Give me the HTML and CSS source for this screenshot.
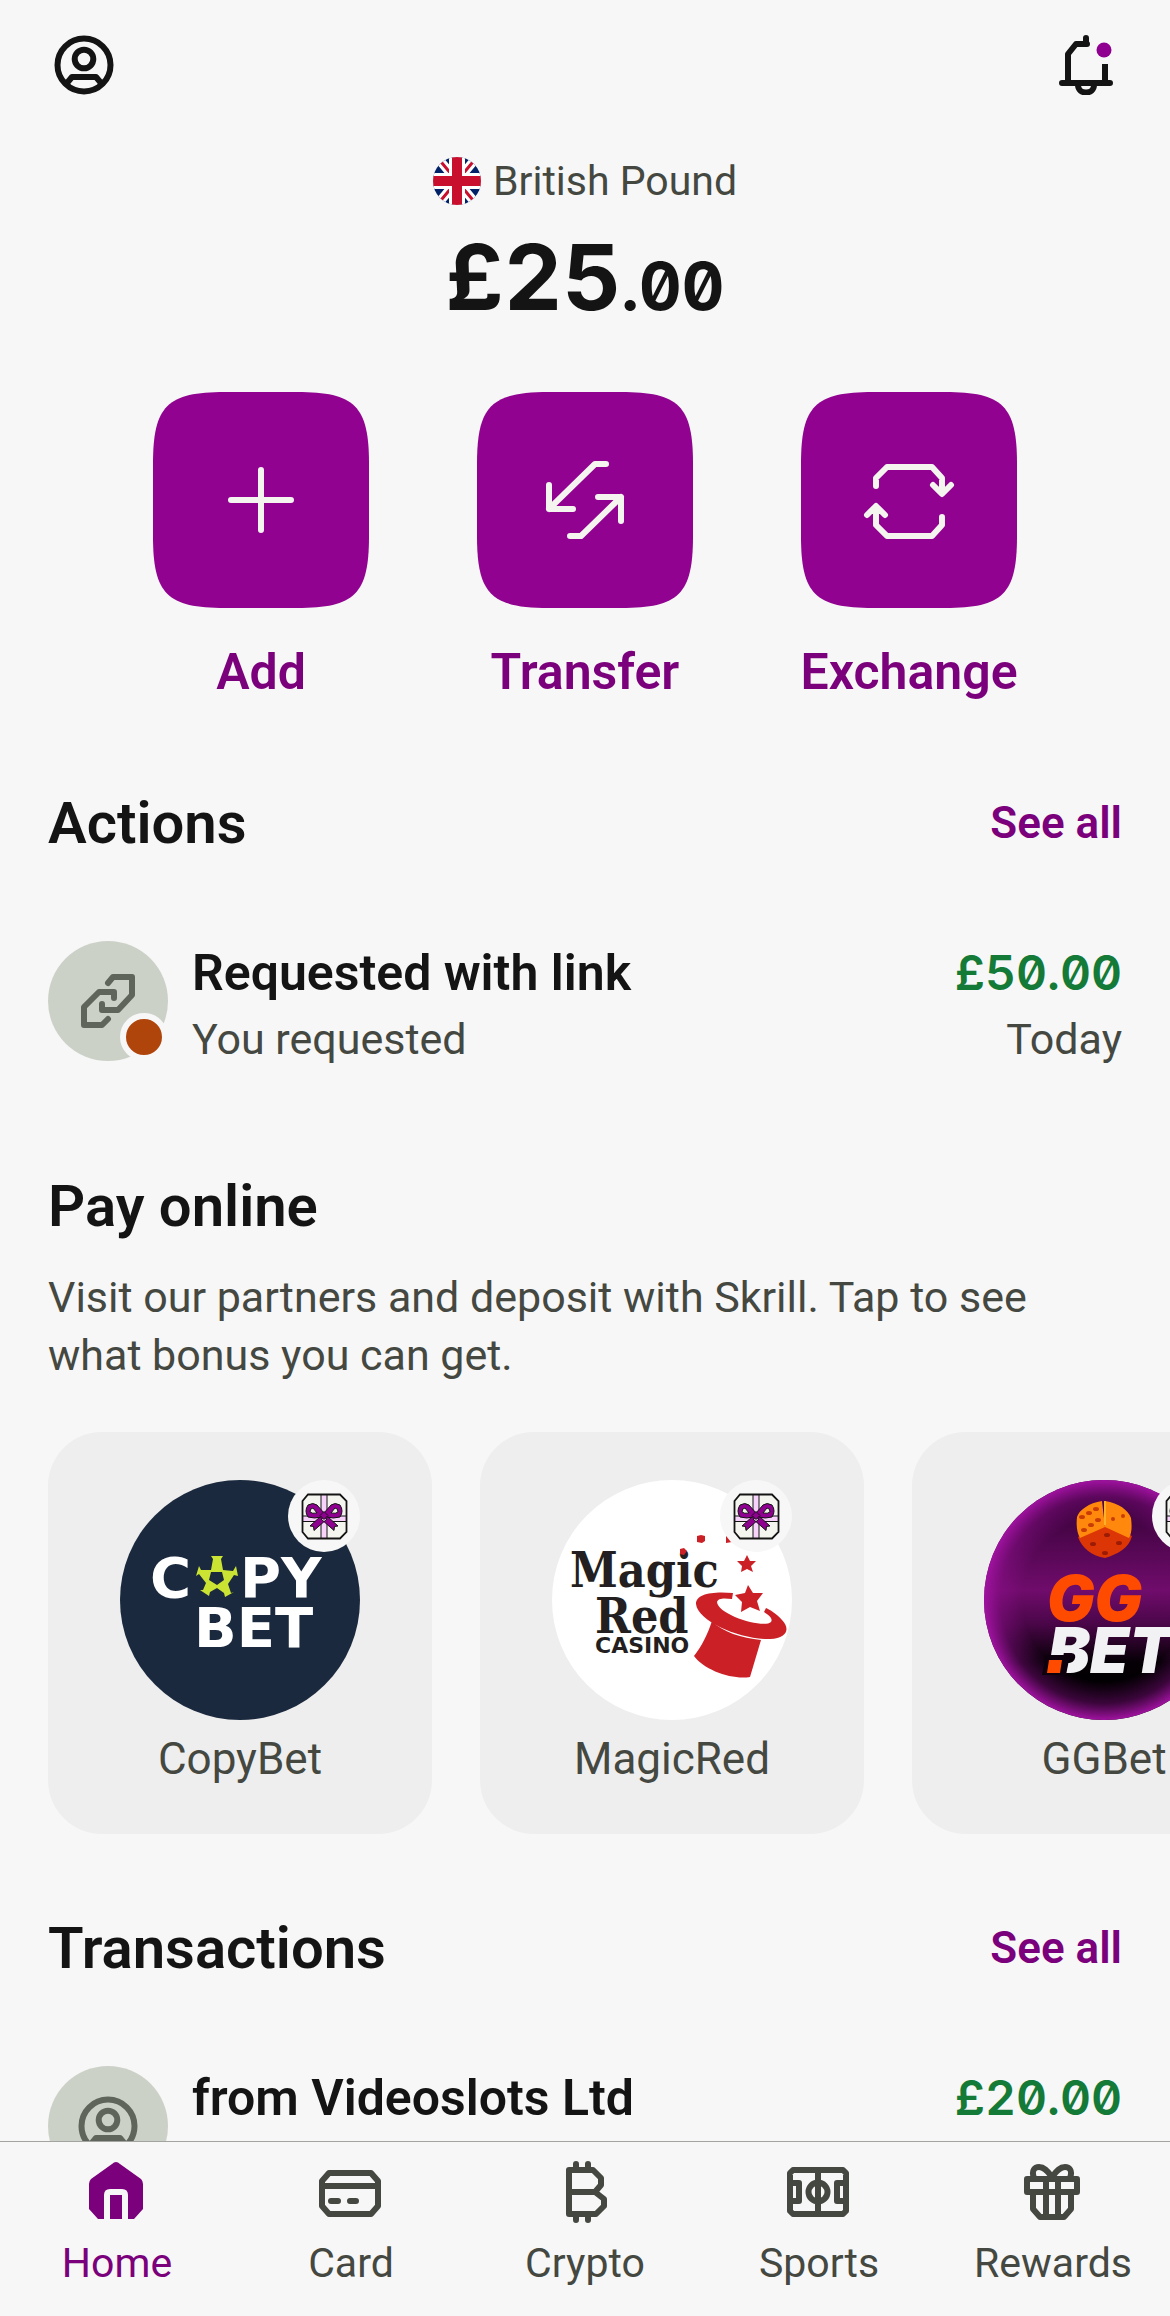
FILE: index.html
```html
<!DOCTYPE html>
<html lang="en">
<head>
<meta charset="utf-8">
<meta name="viewport" content="width=device-width, initial-scale=1">
<title>Wallet home</title>
<link rel="stylesheet" href="styles.css">
</head>
<body>
<svg class="defs" width="0" height="0" aria-hidden="true">
  <symbol id="person" viewBox="0 0 60 60">
    <g fill="none" stroke="currentColor" stroke-width="6" stroke-linejoin="round">
      <circle cx="30" cy="30" r="26.5"/><circle cx="30" cy="24" r="9.3"/><path d="M13 48 18 42H42L47 48"/>
    </g>
  </symbol>
  <symbol id="tile" viewBox="0 0 216 216">
    <path d="M0 72C0 14 14 0 72 0H144C202 0 216 14 216 72V144C216 202 202 216 144 216H72C14 216 0 202 0 144Z"/>
  </symbol>
  <symbol id="bow" viewBox="0 0 72 72">
    <path d="M20 14.500H52L58.500 21V52L52 58.500H20L14.500 52V21Z" fill="#f4f5ef"/>
    <path d="M33 14.500H39V58.500H33ZM14.500 36H58.500V41.500H14.500Z" fill="#f7d2fb" stroke="#141414" stroke-width="1"/>
    <path d="M20 14.500H52L58.500 21V52L52 58.500H20L14.500 52V21Z" fill="none" stroke="#141414" stroke-width="1.800"/>
    <g fill="#900090" stroke="#141414" stroke-width="1" stroke-linejoin="round">
      <path d="M33 36 22 46 25.500 46.500 26 50.500 39 39ZM39 36 50 46 46.500 46.500 46 50.500 33 39Z"/>
      <path fill-rule="evenodd" d="M36 33 29 25Q25 22 20 25Q16 31 20 37Q27 39 33 37ZM29 33Q24 34 22 32Q22 28 25 28Z"/>
      <path fill-rule="evenodd" d="M36 33 43 25Q47 22 52 25Q56 31 52 37Q45 39 39 37ZM43 33Q48 34 50 32Q50 28 47 28Z"/>
      <path d="M36 31.500 40 35.500 36 39.500 32 35.500Z"/>
    </g>
  </symbol>
</svg>

<div class="app">
<main class="content">
  <header class="topbar">
    <button class="icon-button" aria-label="Profile"><svg class="icon"><use href="#person"/></svg></button>
    <button class="icon-button" aria-label="Notifications">
      <svg class="icon" viewBox="0 0 60 60">
        <g fill="none" stroke="#141414" stroke-width="6" stroke-linecap="round" stroke-linejoin="round">
          <path d="M6 48H54M12 48V19L20 9H31M30 3V9M22 50C22 60 38 60 38 50"/><path stroke-linecap="butt" d="M49 48V29"/>
        </g>
        <circle cx="48" cy="15" r="7.500" fill="#900090"/>
      </svg>
    </button>
  </header>

  <section class="balance" aria-label="Balance">
    <p class="currency">
      <svg class="flag" viewBox="0 0 48 48" aria-hidden="true">
        <clipPath id="round"><circle cx="24" cy="24" r="24"/></clipPath>
        <g clip-path="url(#round)">
          <path fill="#012169" d="M0 0H48V48H0Z"/>
          <path stroke="#fff" stroke-width="9" d="M4 0 44 48M44 0 4 48"/>
          <path stroke="#c8102e" stroke-width="3" d="M4 0 44 48M44 0 4 48"/>
          <path stroke="#fff" stroke-width="16" d="M24 0V48M0 24H48"/>
          <path stroke="#c8102e" stroke-width="10" d="M24 0V48M0 24H48"/>
        </g>
      </svg>
      <span>British Pound</span>
    </p>
    <p class="amount">£25<span class="pence">.00</span></p>
  </section>

  <nav class="tiles" aria-label="Money actions">
    <button class="tile">
      <svg class="tile-art" viewBox="0 0 216 216"><use href="#tile"/><path class="stroke" d="M78 108H138M108 78V138"/></svg>
      <span>Add</span>
    </button>
    <button class="tile">
      <svg class="tile-art" viewBox="0 0 216 216"><use href="#tile"/><path class="stroke" d="M129 72H118L72 117M72 93V117H96M93 144H104L144 105M121 105H144V129"/></svg>
      <span>Transfer</span>
    </button>
    <button class="tile">
      <svg class="tile-art" viewBox="0 0 216 216"><use href="#tile"/><path class="stroke" d="M75 94V86L86 75H131L141 86V101M132 93 141 102 150 93M141 125V133L131 144H86L75 133V115M66 123 75 114 84 123"/></svg>
      <span>Exchange</span>
    </button>
  </nav>

  <section class="section">
    <div class="section-head"><h2>Actions</h2><a href="#actions">See all</a></div>
    <article class="entry">
      <div class="avatar">
        <svg class="icon" viewBox="0 0 60 60" fill="none" stroke="currentColor" stroke-width="6" stroke-linecap="round" stroke-linejoin="round"><path d="M30 12 35 6H54V24L40 39H24V33M36 27V21H21L6 36V54H24L30 48"/></svg>
        <span class="status"></span>
      </div>
      <div class="entry-text"><h3>Requested with link</h3><p>You requested</p></div>
      <div class="entry-side"><strong>£50.00</strong><p>Today</p></div>
    </article>
  </section>

  <section class="section pay">
    <div class="section-head"><h2>Pay online</h2></div>
    <p class="intro">Visit our partners and deposit with Skrill. Tap to see what bonus you can get.</p>
    <div class="partners">
      <a class="partner" href="#copybet">
        <span class="logo-wrap">
          <svg class="logo" viewBox="0 0 240 240" aria-hidden="true">
            <circle cx="120" cy="120" r="120" fill="#1b293e"/>
            <g class="copy-text"><text x="30" y="117">C</text><text x="120" y="117">PY</text><text x="74" y="167">BET</text></g>
            <path fill="#cbe433" fill-rule="evenodd" d="M91 76H103L101 79 103 90 113 91 116 86 118 96 114 95 108 104 111 113 114 112 105 117 104 113 97 108 90 112 89 116 80 110 83 110 86 103 79 94 76 96 79 86 81 90 91 90 93 79ZM91 92 89 100 97 105 104 100 102 92Z"/>
          </svg>
          <svg class="badge"><use href="#bow"/></svg>
        </span>
        <span>CopyBet</span>
      </a>
      <a class="partner" href="#magicred">
        <span class="logo-wrap">
          <svg class="logo" viewBox="0 0 240 240" aria-hidden="true">
            <circle cx="120" cy="120" r="120" fill="#fff"/>
            <g class="magic-text"><text x="18" y="107">Magic</text><text x="43" y="153">Red</text></g>
            <text class="casino-text" x="43" y="173">CASINO</text>
            <g fill="#cc2027">
              <path d="M181 113C160 111 144 114 144 124C146 142 190 160 218 159C236 158 238 148 230 140C224 133 218 130 214 128L212 132C218 136 221 139 219 142C212 149 166 135 165 122C166 118 172 118 180 119Z"/>
              <path d="M160 141C170 152 190 158 209 160L198 197C180 200 152 190 142 176C150 166 156 153 160 141Z"/>
              <path d="M196 105 201 113 211 113 205 121 208 131 198 127 189 132 190 122 183 115 193 113ZM195 75 198 81 204 81 199 86 201 92 195 89 189 92 190 86 185 81 192 81ZM145 56 149 55 153 56 153 61 150 63 145 62ZM128 69 132 68 135 71 132 75 128 74ZM174 54 180 62 174 63Z"/>
            </g>
          </svg>
          <svg class="badge"><use href="#bow"/></svg>
        </span>
        <span>MagicRed</span>
      </a>
      <a class="partner" href="#ggbet">
        <span class="logo-wrap">
          <svg class="logo" viewBox="0 0 240 240" aria-hidden="true">
            <defs>
              <radialGradient id="rim"><stop offset=".68" stop-color="#920f92" stop-opacity="0"/><stop offset=".86" stop-color="#920f92" stop-opacity=".4"/><stop offset="1" stop-color="#a012a0"/></radialGradient>
              <linearGradient id="night" x1="0" y1="0" x2="0" y2="1"><stop offset=".1" stop-color="#380239"/><stop offset=".46" stop-color="#700c6c"/><stop offset=".6" stop-color="#4a0648"/><stop offset=".76" stop-color="#050005"/><stop offset=".9" stop-color="#000"/></linearGradient>
            </defs>
            <circle cx="120" cy="120" r="120" fill="url(#night)"/>
            <circle cx="120" cy="120" r="120" fill="url(#rim)"/>
            <path fill="#dc3606" d="M94 57 120 44 148 56C145 68 134 74 121 78C108 76 98 68 94 57Z"/>
            <path fill="#ff880d" d="M118 21C105 23 95 30 93 37C92 45 93 53 96 58L121 47ZM121 21C135 23 144 30 147 38C148 46 148 53 145 58L121 47Z"/>
            <path stroke="#ffb02a" stroke-width="2" d="M121 21V45"/>
            <g fill="#c93c06"><ellipse cx="98" cy="37" rx="3" ry="2"/><ellipse cx="105" cy="33" rx="3" ry="2"/><ellipse cx="112" cy="29" rx="3" ry="2"/><ellipse cx="100" cy="50" rx="3" ry="2"/><ellipse cx="107" cy="45" rx="3" ry="2"/><ellipse cx="114" cy="40" rx="3" ry="2"/><ellipse cx="129" cy="39" rx="2" ry="2"/><ellipse cx="139" cy="36" rx="2" ry="2"/></g>
            <g fill="#9c1b04"><ellipse cx="123" cy="55" rx="3" ry="2"/><ellipse cx="109" cy="64" rx="3" ry="2"/><ellipse cx="135" cy="63" rx="3" ry="2"/><ellipse cx="121" cy="73" rx="3" ry="2"/></g>
            <g class="gg-text"><text x="63" y="141" fill="#ff4b00">GG</text><text x="64" y="193" fill="#f2f2f5">BET</text></g>
            <path fill="#0c010c" d="M62 175H86L82 195H58Z"/>
            <path fill="#ff4b00" d="M65 180H78L76 193H63Z"/>
          </svg>
          <svg class="badge"><use href="#bow"/></svg>
        </span>
        <span>GGBet</span>
      </a>
    </div>
  </section>

  <section class="section transactions">
    <div class="section-head"><h2>Transactions</h2><a href="#transactions">See all</a></div>
    <article class="entry">
      <div class="avatar"><svg class="icon"><use href="#person"/></svg></div>
      <div class="entry-text"><h3>from Videoslots Ltd</h3></div>
      <div class="entry-side"><strong>£20.00</strong></div>
    </article>
  </section>
</main>

<nav class="tabbar" aria-label="Main">
  <a class="tab active" href="#home" aria-current="page">
    <svg viewBox="0 0 72 72"><path fill="currentColor" d="M31 8Q35 4 39 8L60 23Q62 25 62 28V53L53 63H17L8 53V28Q8 25 10 23Z"/><path fill="none" stroke="#f7f7f7" stroke-width="6" d="M26 64V39Q26 36 29 36H41Q44 36 44 39V64"/></svg>
    <span>Home</span>
  </a>
  <a class="tab" href="#card">
    <svg class="line" viewBox="0 0 72 72"><path d="M14 17H56L63 25V50L56 58H14L7 50V25ZM7 30H63M16 45H23M35 45H41"/></svg>
    <span>Card</span>
  </a>
  <a class="tab" href="#crypto">
    <svg class="line" viewBox="0 0 72 72"><path d="M20 14H44L52 22V29L46 36H20M46 36 55 43V50L47 58H20V14M27 8V14M39 8V14M27 58V64M39 58V64"/></svg>
    <span>Crypto</span>
  </a>
  <a class="tab" href="#sports">
    <svg class="line" viewBox="0 0 72 72"><path d="M10 14H60L63 17V55L60 58H10L7 55V17ZM35 14V58M7 27H16V45H7M63 27H54V45H63"/><circle cx="35" cy="36" r="9.500"/></svg>
    <span>Sports</span>
  </a>
  <a class="tab" href="#rewards">
    <svg class="line" viewBox="0 0 72 72"><path d="M10 23H60V36H10ZM16 36V53L23 61H47L54 53V36M29 23V61M41 23V61M17 22C14 14 18 11 22 11C28 11 31 16 35 21C39 16 42 11 48 11C52 11 56 14 53 22"/></svg>
    <span>Rewards</span>
  </a>
</nav>
</div>
</body>
</html>
```

FILE: styles.css
```css
:root {
  --bg: #f7f7f7;
  --ink: #141414;
  --muted: #444841;
  --purple: #7b007b;
  --green: #147a37;
}

* { box-sizing: border-box; }

body {
  margin: 0;
  background: var(--bg);
  color: var(--ink);
  font-family: Roboto, "Liberation Sans", sans-serif;
}

h2, h3, p { margin: 0; }
a { color: inherit; text-decoration: none; }
button { border: 0; padding: 0; background: none; font: inherit; color: inherit; }
svg { display: block; }
.defs { position: absolute; }

.app { display: flex; flex-direction: column; height: 100vh; }

.content {
  flex: 1;
  min-height: 0;
  overflow: hidden auto;
  scrollbar-width: none;
}

.topbar {
  display: flex;
  justify-content: space-between;
  padding: 35px 54px 34px;
}
.icon { width: 60px; height: 60px; }

.balance { text-align: center; padding-top: 28px; }
.currency {
  display: flex;
  justify-content: center;
  align-items: center;
  gap: 12px;
  color: var(--muted);
  font-size: 41px;
  line-height: 48px;
}
.flag { width: 48px; height: 48px; }
.amount {
  margin-top: 24px;
  font-family: Inter, sans-serif;
  font-size: 91px;
  font-weight: 700;
  line-height: 96px;
  font-feature-settings: "zero", "tnum";
}
.pence { font-size: 66px; line-height: 72px; }

.tiles {
  display: flex;
  justify-content: center;
  gap: 108px;
  margin-top: 67px;
}
.tile {
  display: flex;
  flex-direction: column;
  align-items: center;
  gap: 34px;
  width: 216px;
  color: var(--purple);
  font-size: 50px;
  font-weight: 600;
  line-height: 60px;
}
.tile-art { width: 216px; height: 216px; fill: #90028f; }
.stroke {
  fill: none;
  stroke: #f5f5f0;
  stroke-width: 6;
  stroke-linecap: round;
  stroke-linejoin: round;
}

.section { padding: 0 48px; margin-top: 85px; }
.section-head {
  display: flex;
  justify-content: space-between;
  align-items: center;
  line-height: 72px;
}
h2 { font-size: 58px; font-weight: 600; }
.section-head a { color: var(--purple); font-size: 44px; font-weight: 600; }

.entry { display: flex; gap: 24px; margin-top: 82px; }
.avatar {
  position: relative;
  display: grid;
  place-items: center;
  width: 120px;
  height: 120px;
  border-radius: 50%;
  background: #ccd1c8;
  color: #60655b;
}
.status {
  position: absolute;
  right: 0;
  bottom: 0;
  width: 48px;
  height: 48px;
  border: 6px solid var(--bg);
  border-radius: 50%;
  background: #b0450c;
}
.entry-text { flex: 1; }
.entry-side { text-align: right; }
.entry h3, .entry strong {
  display: block;
  margin-bottom: 2px;
  font-size: 50px;
  font-weight: 600;
  line-height: 64px;
}
.entry strong {
  color: var(--green);
  font-family: Inter, sans-serif;
  font-size: 48px;
  font-feature-settings: "zero", "tnum";
}
.entry p { color: var(--muted); font-size: 43px; line-height: 64px; }

.pay { margin-top: 99px; }
.intro {
  margin-top: 26px;
  color: var(--muted);
  font-size: 43px;
  line-height: 58px;
}
.partners {
  display: flex;
  gap: 48px;
  margin: 48px -48px 0;
  padding: 0 48px;
  overflow-x: auto;
  scrollbar-width: none;
}
.partner {
  flex: none;
  display: flex;
  flex-direction: column;
  align-items: center;
  gap: 15px;
  width: 384px;
  padding: 48px 0 51px;
  border-radius: 54px;
  background: #eeeeee;
  color: var(--muted);
  font-size: 44px;
  line-height: 48px;
}
.logo-wrap { position: relative; }
.logo { width: 240px; height: 240px; }
.badge {
  position: absolute;
  top: 0;
  right: 0;
  width: 72px;
  height: 72px;
  border-radius: 50%;
  background: var(--bg);
}
.copy-text { fill: #fff; font: 700 56px "DejaVu Sans", sans-serif; }
.magic-text { fill: #231f20; font: 700 48px "DejaVu Serif Condensed", "DejaVu Serif", serif; }
.casino-text { fill: #231f20; font: 700 22px "DejaVu Sans", sans-serif; }
.gg-text { font: italic 900 63px Inter, sans-serif; }

.transactions { margin-top: 78px; }

.tabbar {
  display: grid;
  grid-template-columns: repeat(5, 1fr);
  padding: 14px 0 29px;
  border-top: 1px solid #a3a5a1;
}
.tab {
  display: flex;
  flex-direction: column;
  align-items: center;
  gap: 11px;
  color: var(--muted);
  font-size: 41px;
  line-height: 48px;
}
.tab svg { width: 72px; height: 72px; }
.tab.active { color: var(--purple); }
.line {
  fill: none;
  stroke: currentColor;
  stroke-width: 6;
  stroke-linecap: round;
  stroke-linejoin: round;
}
```
